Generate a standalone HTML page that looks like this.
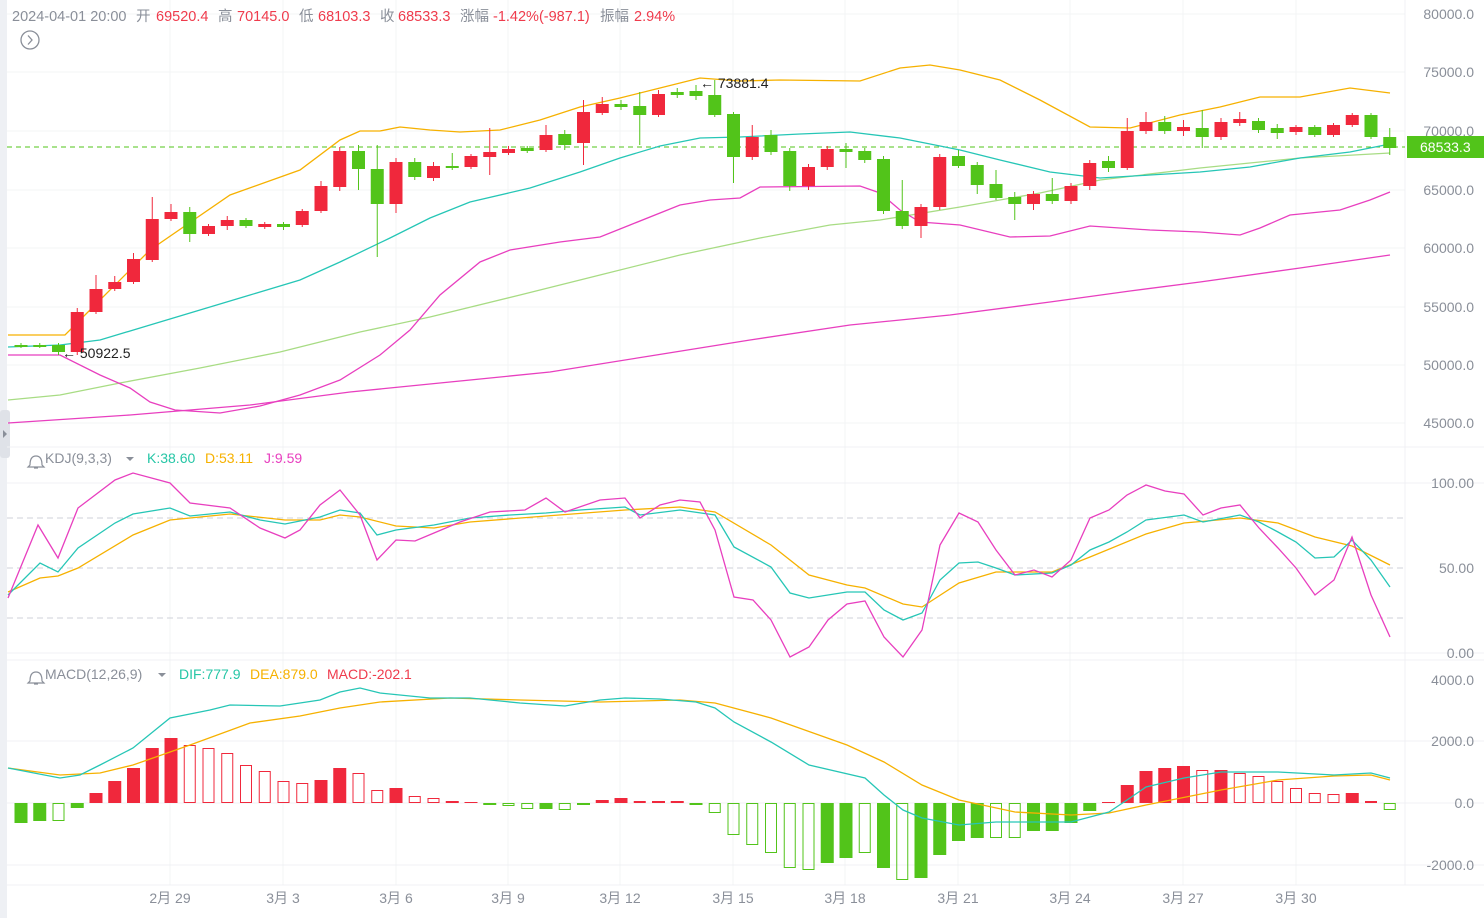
<!DOCTYPE html>
<html><head><meta charset="utf-8"><style>
html,body{margin:0;padding:0;background:#fff;width:1484px;height:918px;overflow:hidden;font-family:"Liberation Sans","Noto Sans CJK SC",sans-serif}
svg{position:absolute;left:0;top:0}
</style></head><body>
<svg id="s" width="1484" height="918" xmlns="http://www.w3.org/2000/svg" font-family="Liberation Sans, Noto Sans CJK SC, sans-serif">
<rect x="0" y="0" width="7" height="918" fill="#eef0f4"/>
<rect x="0" y="410" width="10" height="48" rx="3" fill="#dfe2e8"/>
<path d="M3 430 l4 4 l-4 4z" fill="#8a8f99"/>
<g id="grid"></g>
<g id="g"></g>
<g font-size="14.5" fill="#8a8f99">
<text x="12" y="21">2024-04-01 20:00</text>
<text x="136" y="21">开</text><text x="156" y="21" fill="#ef3b4c">69520.4</text>
<text x="218" y="21">高</text><text x="237" y="21" fill="#ef3b4c">70145.0</text>
<text x="299" y="21">低</text><text x="318" y="21" fill="#ef3b4c">68103.3</text>
<text x="380" y="21">收</text><text x="398" y="21" fill="#ef3b4c">68533.3</text>
<text x="460" y="21">涨幅</text><text x="493" y="21" fill="#ef3b4c">-1.42%(-987.1)</text>
<text x="600" y="21">振幅</text><text x="634" y="21" fill="#ef3b4c">2.94%</text>
</g>
<circle cx="30" cy="40" r="9" fill="none" stroke="#8a8f99" stroke-width="1.3"/>
<path d="M28 35.5 l4 4.5 l-4 4.5" fill="none" stroke="#8a8f99" stroke-width="1.3"/>
<g font-size="14">
<path d="M30 465 q0-9 6-9 q6 0 6 9 l2 2 h-16z M34 468 h4" fill="none" stroke="#8a8f99" stroke-width="1.2"/>
<text x="45" y="463" fill="#8a8f99">KDJ(9,3,3)</text>
<path d="M126 457 h8 l-4 4z" fill="#8a8f99"/>
<text x="147" y="463" fill="#26c6a6">K:38.60</text>
<text x="205" y="463" fill="#f6b100">D:53.11</text>
<text x="264" y="463" fill="#e83fbf">J:9.59</text>
<path d="M30 681 q0-9 6-9 q6 0 6 9 l2 2 h-16z M34 684 h4" fill="none" stroke="#8a8f99" stroke-width="1.2"/>
<text x="45" y="679" fill="#8a8f99">MACD(12,26,9)</text>
<path d="M158 673 h8 l-4 4z" fill="#8a8f99"/>
<text x="179" y="679" fill="#26c6a6">DIF:777.9</text>
<text x="250" y="679" fill="#f6b100">DEA:879.0</text>
<text x="327" y="679" fill="#ef3b4c">MACD:-202.1</text>
</g>
<g id="ax" font-size="14" fill="#8a8f99"></g>
<rect x="1407" y="136" width="77" height="22" fill="#52c41a"/>
<text x="1420" y="152" font-size="14" fill="#fff">68533.3</text>
<text x="700" y="88" font-size="14" fill="#222">← 73881.4</text>
<text x="62" y="358" font-size="14" fill="#222">← 50922.5</text>
</svg>
<script>
var NS="http://www.w3.org/2000/svg",G=document.getElementById('g'),GR=document.getElementById('grid'),AX=document.getElementById('ax');
function el(p,t,a){var e=document.createElementNS(NS,t);for(var k in a)e.setAttribute(k,a[k]);p.appendChild(e);return e}
function tx(p,x,y,s,a){var e=el(p,'text',Object.assign({x:x,y:y},a||{}));e.textContent=s}
var dx=[170,283,396,508,620,733,845,958,1070,1183,1296];
dx.forEach(function(x){el(GR,'line',{x1:x,y1:0,x2:x,y2:885,stroke:'#f3f4f6'})});
[14,72,131,190,248,307,365,423].forEach(function(y){el(GR,'line',{x1:7,y1:y,x2:1405,y2:y,stroke:'#f3f4f6'})});
[447,483,653,660,741,803,865,885].forEach(function(y){el(GR,'line',{x1:7,y1:y,x2:1484,y2:y,stroke:'#f0f1f4'})});
el(GR,'line',{x1:1405,y1:0,x2:1405,y2:885,stroke:'#f0f1f4'});
[518,568,618].forEach(function(y){el(GR,'line',{x1:7,y1:y,x2:1405,y2:y,stroke:'#cfd2d8','stroke-dasharray':'6,4'})});
el(GR,'line',{x1:7,y1:147,x2:1405,y2:147,stroke:'#52c41a','stroke-dasharray':'5,4'});
var pl=[['80000.0',14],['75000.0',72],['70000.0',131],['65000.0',190],['60000.0',248],['55000.0',307],['50000.0',365],['45000.0',423],['100.00',483],['50.00',568],['0.00',653],['4000.0',680],['2000.0',741],['0.0',803],['-2000.0',865]];
pl.forEach(function(p){tx(AX,1474,p[1]+5,p[0],{'text-anchor':'end'})});
var dl=['2月 29','3月 3','3月 6','3月 9','3月 12','3月 15','3月 18','3月 21','3月 24','3月 27','3月 30'];
dl.forEach(function(s,i){tx(AX,dx[i],903,s,{'text-anchor':'middle'})});
function line(pts,c){el(G,'polyline',{points:pts.map(function(p){return p.join(',')}).join(' '),fill:'none',stroke:c,'stroke-width':1.3})}
line([[8,423],[130,415],[250,405],[350,392],[450,382],[550,372],[650,356],[750,340],[850,325],[950,315],[1050,302],[1130,291],[1200,282],[1300,268],[1390,255]],'#e83fbf');
line([[8,400],[60,395],[120,383],[200,368],[280,352],[360,332],[430,317],[520,295],[600,275],[680,255],[760,238],[830,225],[880,220],[960,207],[1040,193],[1100,180],[1200,168],[1300,158],[1390,153]],'#a8dc84');
line([[8,347],[60,345],[100,340],[150,325],[200,310],[250,295],[300,280],[340,262],[390,238],[430,218],[470,202],[530,188],[580,172],[620,158],[660,146],[700,138],[740,137],[800,134],[850,132],[900,138],[960,150],[1000,160],[1050,172],[1100,178],[1150,175],[1200,172],[1250,167],[1300,158],[1350,152],[1390,144]],'#26c6b6');
line([[8,335],[65,335],[90,310],[150,250],[230,195],[300,170],[340,140],[360,131],[380,131],[400,127],[430,130],[460,132],[500,130],[540,120],[580,107],[620,98],[660,88],[700,78],[740,81],[780,80],[860,81],[900,68],[930,65],[960,70],[1000,80],[1040,100],[1090,127],[1130,128],[1180,115],[1220,107],[1260,97],[1300,97],[1350,88],[1390,93]],'#f6b100');
line([[8,355],[60,355],[100,375],[130,388],[150,402],[175,410],[220,413],[260,406],[300,395],[340,380],[380,355],[410,330],[440,295],[480,262],[510,250],[560,242],[600,237],[630,225],[680,205],[710,200],[740,198],[760,187],[860,186],[880,193],[900,210],[920,222],[960,225],[1010,237],[1050,236],[1090,226],[1150,230],[1200,232],[1240,235],[1260,228],[1290,215],[1340,210],[1370,200],[1390,192]],'#e83fbf');
var C=[[345,345,343,348],[345,346,343,348],[345,352,343,355],[352,312,308,355],[312,289,275,314],[289,282,276,291],[282,259,253,284],[260,219,197,262],[219,212,204,221],[212,234,207,242],[234,226,224,236],[226,220,216,230],[220,226,218,228],[227,224,222,229],[224,227,222,230],[225,211,209,227],[211,186,181,213],[187,151,147,191],[151,169,145,190],[169,204,145,257],[204,162,158,213],[162,177,158,180],[178,166,162,181],[166,168,153,170],[167,156,154,169],[157,152,128,175],[153,149,146,155],[148,151,146,153],[150,135,125,152],[134,145,130,150],[143,112,100,165],[113,104,97,115],[104,107,100,110],[106,115,92,145],[115,94,90,117],[92,95,88,98],[91,96,85,100],[95,115,80,117],[114,157,112,183],[157,137,125,160],[135,152,130,155],[151,186,148,191],[186,167,164,190],[167,149,146,170],[149,152,143,168],[151,160,148,163],[159,211,156,214],[211,226,180,229],[226,207,204,238],[207,157,154,210],[156,166,150,168],[165,185,162,194],[184,198,170,200],[197,204,192,220],[204,194,191,210],[194,201,178,204],[201,186,183,204],[186,163,160,190],[161,168,156,172],[168,131,118,170],[131,122,112,134],[122,131,116,134],[131,127,120,136],[128,137,110,148],[137,122,118,140],[123,119,112,126],[121,130,118,133],[128,133,124,139],[132,127,125,135],[127,135,125,137],[135,125,123,137],[125,115,113,127],[115,137,113,139],[137,148,128,155]];
var R='#f0283c',Gn='#52c41a';
C.forEach(function(c,i){var x=21+18.75*i,col=c[1]<c[0]?R:Gn;
el(G,'line',{x1:x,y1:c[2],x2:x,y2:c[3],stroke:col,'stroke-width':1});
var t=Math.min(c[0],c[1]),h=Math.max(Math.abs(c[0]-c[1]),2);
el(G,'rect',{x:x-6.5,y:t,width:13,height:h,fill:col});});
line([[8,592],[40,578],[58,576],[78,568],[133,535],[170,520],[230,514],[285,520],[320,520],[340,515],[360,517],[396,526],[434,528],[470,522],[546,516],[625,510],[680,507],[715,512],[771,545],[809,575],[847,585],[865,588],[903,604],[922,607],[959,583],[996,572],[1052,572],[1090,557],[1146,534],[1184,523],[1240,518],[1278,523],[1315,537],[1352,546],[1390,565]],'#f6b100');
line([[8,595],[40,563],[58,572],[78,548],[115,523],[133,514],[170,508],[190,516],[230,512],[260,520],[285,524],[320,517],[340,510],[360,513],[377,535],[396,530],[434,525],[470,518],[510,515],[546,513],[580,510],[625,507],[640,515],[680,510],[715,515],[734,547],[771,567],[790,593],[809,598],[847,592],[865,592],[884,610],[903,620],[922,613],[940,580],[959,563],[978,562],[996,568],[1015,575],[1052,573],[1071,565],[1090,550],[1109,542],[1127,532],[1146,520],[1184,515],[1203,522],[1240,515],[1259,522],[1278,532],[1296,542],[1315,558],[1334,557],[1352,540],[1371,560],[1390,587]],'#26c6b6');
line([[8,598],[38,525],[58,558],[78,508],[115,480],[133,473],[170,483],[190,503],[230,508],[260,528],[285,538],[300,530],[320,505],[340,490],[360,515],[377,560],[396,540],[415,541],[434,533],[460,522],[490,512],[525,510],[546,498],[565,512],[600,500],[625,498],[640,518],[660,505],[680,500],[700,502],[715,530],[734,597],[753,600],[771,620],[790,657],[809,647],[828,620],[847,604],[865,601],[884,637],[903,657],[922,630],[940,545],[959,513],[978,522],[996,550],[1015,575],[1034,570],[1052,577],[1071,560],[1090,518],[1109,510],[1127,495],[1146,485],[1165,491],[1184,494],[1203,515],[1221,508],[1240,505],[1259,528],[1278,548],[1296,568],[1315,595],[1334,580],[1352,537],[1371,595],[1390,637]],'#e83fbf');
var H=[[-20,0],[-18,0],[-18,1],[-5,0],[10,0],[22,0],[35,0],[55,0],[65,0],[58,1],[55,1],[50,1],[38,1],[32,1],[22,1],[20,1],[23,0],[35,0],[30,1],[13,1],[15,0],[7,1],[5,1],[2,0],[1,0],[-2,0],[-3,1],[-6,1],[-6,0],[-7,1],[-2,0],[3,0],[5,0],[2,1],[2,0],[2,0],[-2,0],[-10,1],[-32,1],[-42,1],[-50,1],[-65,1],[-67,1],[-60,0],[-55,0],[-50,1],[-65,0],[-77,1],[-75,0],[-52,0],[-38,0],[-35,0],[-35,1],[-35,1],[-28,0],[-28,0],[-20,0],[-8,0],[0,0],[18,0],[32,0],[35,0],[37,0],[33,1],[33,0],[30,1],[27,1],[22,1],[15,1],[10,1],[9,1],[10,0],[2,1],[-7,1]];
H.forEach(function(h,i){var x=21+18.75*i,v=h[0],col=v>=0?R:Gn;if(v==0)v=1;
var y=v>0?803-v:803,hh=Math.abs(v);
if(h[1])el(G,'rect',{x:x-5.5,y:y+0.5,width:11,height:Math.max(hh-1,1),fill:'none',stroke:col,'stroke-width':1});
else el(G,'rect',{x:x-6.5,y:y,width:13,height:hh,fill:col});});
line([[8,768],[60,775],[100,773],[133,765],[190,745],[250,723],[300,716],[340,708],[380,702],[450,698],[520,700],[600,702],[680,700],[715,703],[771,718],[847,745],[884,762],[922,785],[959,800],[1015,812],[1071,815],[1109,813],[1146,805],[1221,790],[1278,780],[1334,776],[1371,775],[1390,780]],'#f6b100');
line([[8,768],[60,778],[80,775],[100,765],[133,748],[170,718],[210,710],[230,705],[280,706],[320,700],[340,692],[360,688],[380,693],[430,698],[470,698],[520,703],[565,706],[600,700],[625,698],[660,699],[696,702],[715,708],[734,722],[771,742],[809,765],[865,778],[884,795],[903,810],[922,818],[959,825],[996,822],[1034,822],[1071,822],[1109,812],[1127,800],[1146,787],[1184,778],[1221,772],[1278,772],[1334,775],[1371,773],[1390,778]],'#26c6b6');
</script>
</body></html>
